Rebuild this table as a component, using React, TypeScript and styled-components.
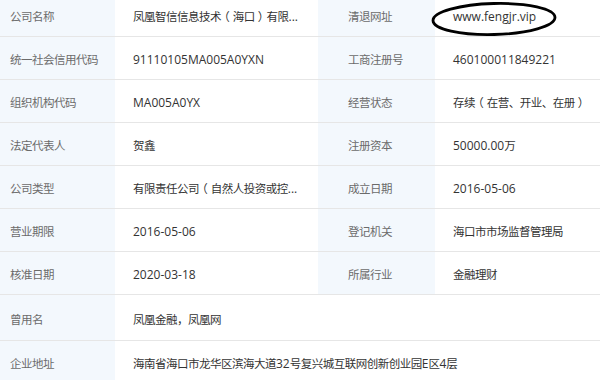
import * as React from 'react'
import styled, { createGlobalStyle } from 'styled-components'

const GlobalStyle = createGlobalStyle`
  html, body {
    margin: 0;
    padding: 0;
    background: #ffffff;
  }
  body {
    font-family: "Open Sans", "Noto Sans CJK SC", sans-serif;
  }
`

const Sheet = styled.div`
  width: 600px;
  height: 380px;
  overflow: hidden;
  background: #ffffff;
`

// the top of the table is cut off in the shot
const Rows = styled.div`
  margin-top: -6px;
`

const Row = styled.div<{ $h?: number }>`
  display: grid;
  grid-template-columns: 115px 203px 117px 165px;
  height: ${p => p.$h ?? 43}px;
  box-sizing: border-box;
  border-bottom: 1px solid #e6e6e6;
`

const Label = styled.div<{ $pad: number }>`
  display: flex;
  align-items: center;
  padding: 2px 0 0 ${p => p.$pad}px;
  background: #f3f8fd;
  color: #6b6b6b;
  font-size: 12px;
  white-space: nowrap;
`

const Value = styled.div<{ $wide?: boolean }>`
  position: relative;
  display: flex;
  align-items: center;
  padding: 2px 0 0 18px;
  color: #333333;
  font-size: 12px;
  white-space: nowrap;
  ${p => (p.$wide ? 'grid-column: span 3;' : '')}
`

// Chinese glyphs sit a little tighter than the latin ones in the shot
const Han = styled.span`
  font-family: "Noto Sans CJK SC", sans-serif;
  font-size: 11.5px;
  letter-spacing: -0.5px;
`

const Paren = styled.span`
  font-family: "Noto Sans CJK SC", sans-serif;
  font-size: 11.5px;
  font-feature-settings: "halt";
  margin: 0 3px;
`

const Ring = styled.svg`
  position: absolute;
  left: -4px;
  top: 6px;
  overflow: visible;
  pointer-events: none;
`

const mix = (text: string) =>
  text
    .split(/([（）]|[\u3000-\u303f\u4e00-\u9fff\uff01-\uff07\uff0a-\uffef]+)/)
    .filter(Boolean)
    .map((part, i) => {
      if (part === '（' || part === '）') return <Paren key={i}>{part}</Paren>
      if (/[\u3000-\u9fff\uff00-\uffef]/.test(part)) return <Han key={i}>{part}</Han>
      return <React.Fragment key={i}>{part}</React.Fragment>
    })

type Pair = [string, string]

const pairs: [Pair, Pair][] = [
  [['统一社会信用代码', '91110105MA005A0YXN'], ['工商注册号', '460100011849221']],
  [['组织机构代码', 'MA005A0YX'], ['经营状态', '存续（在营、开业、在册）']],
  [['法定代表人', '贺鑫'], ['注册资本', '50000.00万']],
  [['公司类型', '有限责任公司（自然人投资或控...'], ['成立日期', '2016-05-06']],
  [['营业期限', '2016-05-06'], ['登记机关', '海口市市场监督管理局']],
  [['核准日期', '2020-03-18'], ['所属行业', '金融理财']],
]

export default function App() {
  return (
    <Sheet>
      <GlobalStyle />
      <Rows>
        <Row>
          <Label $pad={10}>{mix('公司名称')}</Label>
          <Value>{mix('凤凰智信信息技术（海口）有限...')}</Value>
          <Label $pad={30}>{mix('清退网址')}</Label>
          <Value>
            www.fengjr.vip
            <Ring width="130" height="38" viewBox="0 0 130 38">
              <ellipse
                cx="63"
                cy="19"
                rx="61"
                ry="15.5"
                fill="none"
                stroke="#000"
                strokeWidth="2.8"
                transform="rotate(-1.5 63 19)"
              />
            </Ring>
          </Value>
        </Row>
        {pairs.map(([a, b]) => (
          <Row key={a[0]}>
            <Label $pad={10}>{mix(a[0])}</Label>
            <Value>{mix(a[1])}</Value>
            <Label $pad={30}>{mix(b[0])}</Label>
            <Value>{mix(b[1])}</Value>
          </Row>
        ))}
        <Row $h={46}>
          <Label $pad={10}>{mix('曾用名')}</Label>
          <Value $wide>{mix('凤凰金融，凤凰网')}</Value>
        </Row>
        <Row>
          <Label $pad={10}>{mix('企业地址')}</Label>
          <Value $wide>{mix('海南省海口市龙华区滨海大道32号复兴城互联网创新创业园E区4层')}</Value>
        </Row>
      </Rows>
    </Sheet>
  )
}
